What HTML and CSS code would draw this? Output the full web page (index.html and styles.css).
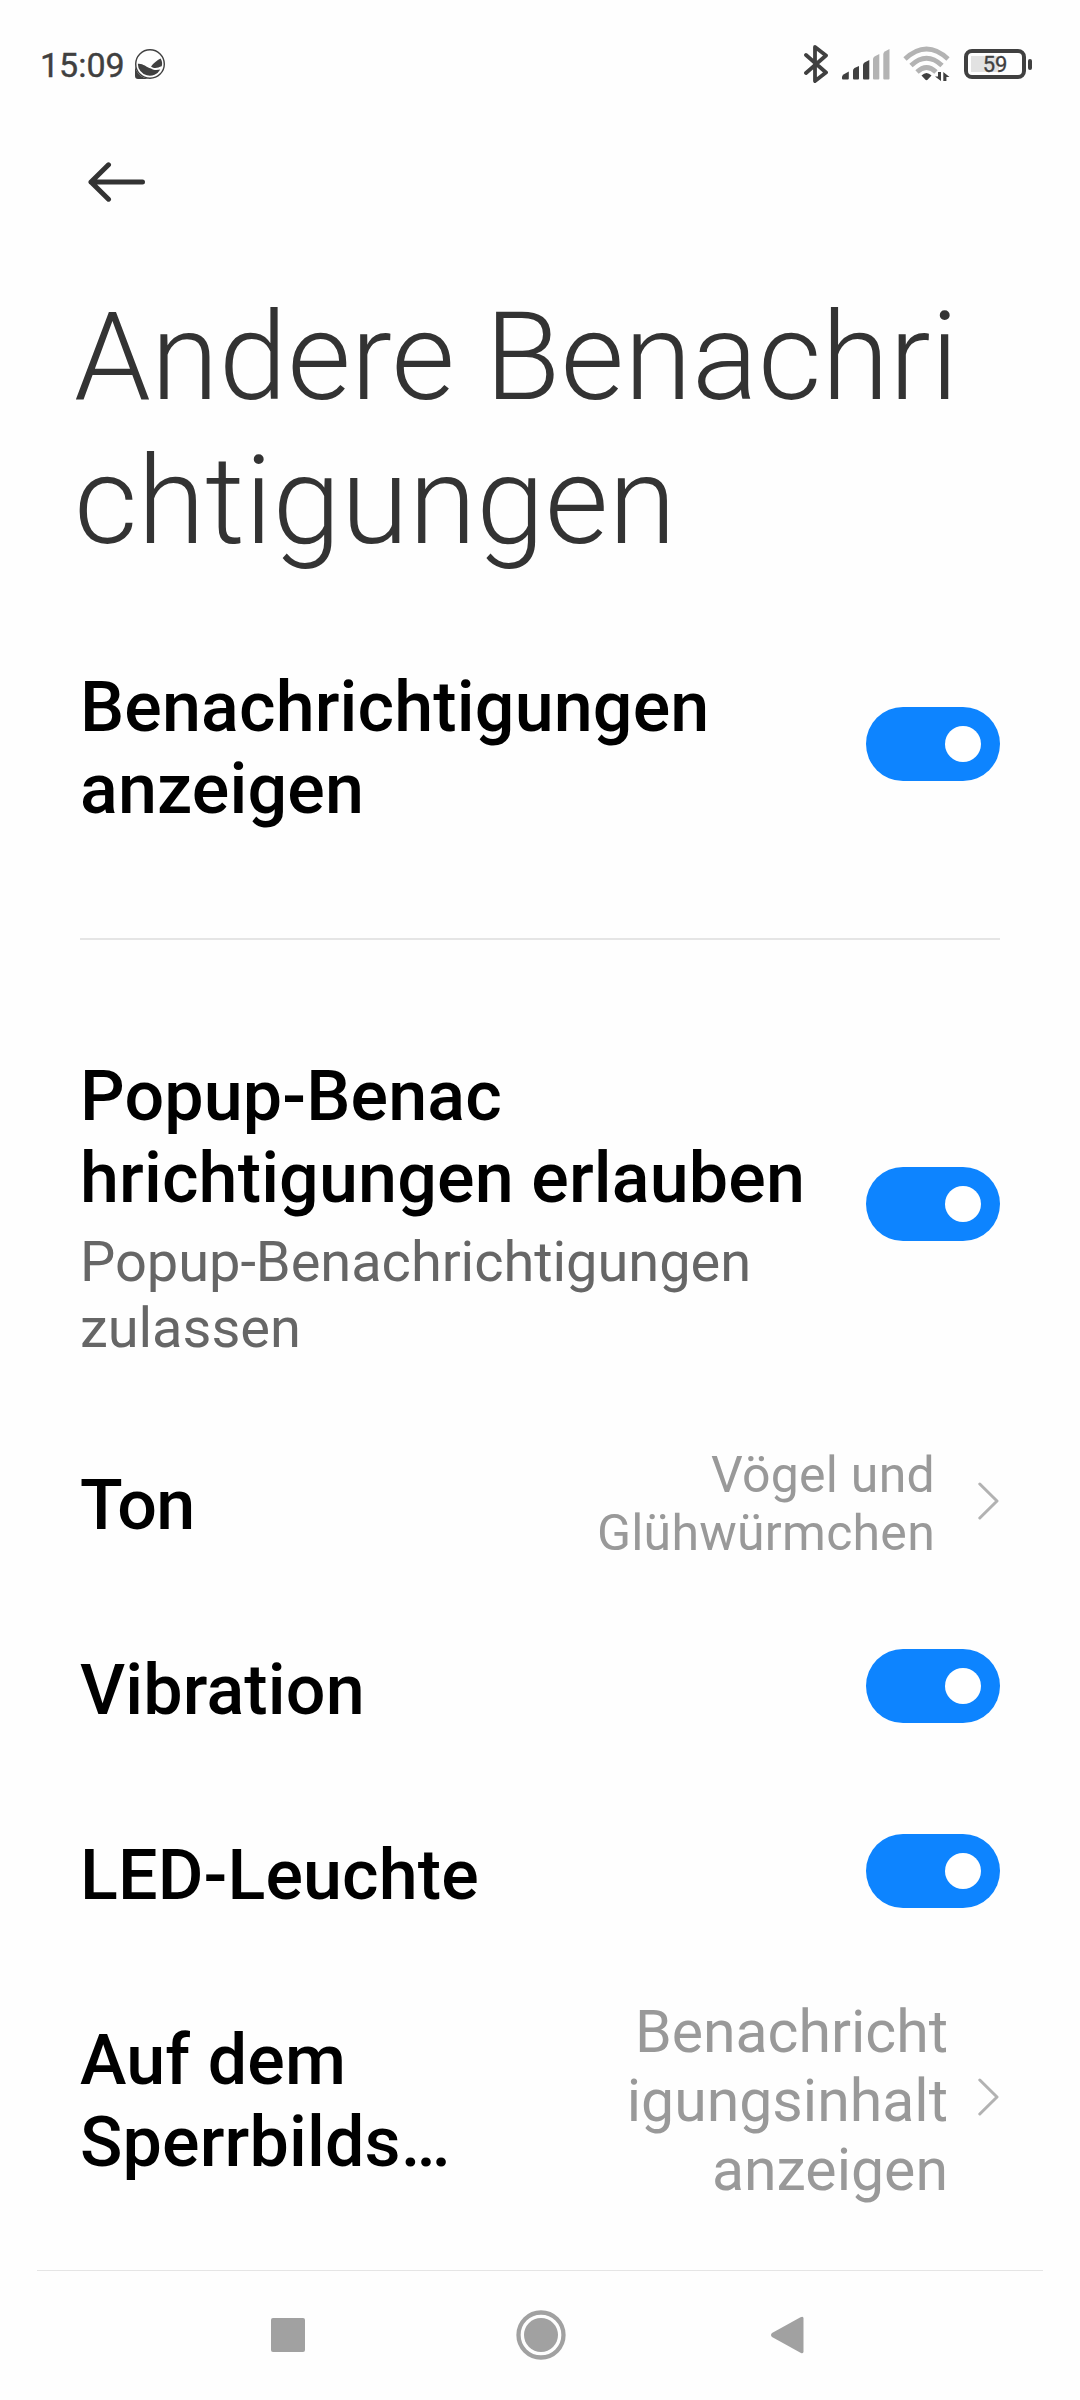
FILE: index.html
```html
<!DOCTYPE html>
<html lang="de">
<head>
<meta charset="utf-8">
<title>Andere Benachrichtigungen</title>
<link rel="stylesheet" href="styles.css">
</head>
<body>
<div class="screen">
  <header class="status">
    <span class="time">15:09</span>
    <svg class="app-icon" width="30" height="30" viewBox="0 0 30 30">
      <path d="M0 15V27Q0 30 3 30H15A15 15 0 0 1 0 15Z" fill="#404040"/>
      <circle cx="15" cy="15" r="14.3" fill="#fefefe" stroke="#404040" stroke-width="1.4"/>
      <path d="M2.800 14.800C8 14.200 11 18 16 19.500C19.500 21.800 22.500 21 25.300 20.500A12 12 0 0 1 2.800 14.800Z" fill="#404040"/>
      <path d="M16 17.500C18.500 14 22 11.500 25.500 9.500Q28 13 26.700 17.300C23 18.500 20 20.500 16 17.500Z" fill="#404040"/>
    </svg>
    <div class="indicators">
      <svg width="24" height="40" viewBox="0 0 24 40" fill="none" stroke="#404040" stroke-width="3.8" stroke-linejoin="round" stroke-linecap="round"><path d="M2 11L22 28.500L11 37V3L22 11.500L2 29"/></svg>
      <svg class="signal" width="48" height="31" viewBox="0 0 48 31">
        <g fill="#404040"><path d="M0 28Q0 26.500 1.500 25.500L6.800 22.500V29.500Q6.800 30.500 5.800 30.500H1Q0 30.500 0 29.500Z"/><path d="M11 21.500Q11 20 12.500 19L17 17V29.500Q17 30.500 16 30.500H12Q11 30.500 11 29.500Z"/><path d="M21 16Q21 14.500 22.500 13.500L27.300 11V29.500Q27.300 30.500 26.300 30.500H22Q21 30.500 21 29.500Z"/></g>
        <g fill="#b3b3b3"><path d="M31 10Q31 8.500 32.500 7.500L37.300 5V29.500Q37.300 30.500 36.300 30.500H32Q31 30.500 31 29.500Z"/><path d="M41.300 5Q41.300 3.500 42.800 2.500L47.500 0V29.500Q47.500 30.500 46.500 30.500H42.300Q41.300 30.500 41.300 29.500Z"/></g>
      </svg>
      <svg class="wifi" width="48" height="36" viewBox="0 0 48 36">
        <g fill="none" stroke="#b3b3b3" stroke-width="4.800"><path d="M2 13Q23.500-7 45 13"/><path d="M8 19.500Q23.500 5 39 19.500"/><path d="M14 26Q23.500 17 33 26"/></g>
        <path d="M18.500 29.500Q23.500 24.500 28.500 29.500L24.800 33.500Q23.500 34.800 22.200 33.500Z" fill="#404040"/>
        <path d="M38 26V35L32 30.500H35V26ZM40.300 35V26L46.500 31H43.400V35Z" fill="#404040"/>
      </svg>
      <div class="battery"><span>59</span></div>
    </div>
  </header>
  <nav class="toolbar">
    <svg width="58" height="40" viewBox="0 0 58 40" fill="none" stroke="#333" stroke-width="5" stroke-linecap="round" stroke-linejoin="round"><path d="M20.500 2.800L3 20L20.500 37.200M3 20H54.500"/></svg>
  </nav>
  <h1>Andere Benachri<br>chtigungen</h1>
  <main>
    <section class="row show">
      <div class="label">Benachrichtigungen<br>anzeigen</div>
      <div class="switch"></div>
    </section>
    <hr>
    <section class="row popup">
      <div><div class="label">Popup-Benac<br>hrichtigungen erlauben</div><p>Popup-Benachrichtigungen<br>zulassen</p></div>
      <div class="switch"></div>
    </section>
    <section class="row sound">
      <div class="label">Ton</div>
      <div class="value">Vögel und<br>Glühwürmchen</div>
      <svg class="chevron" width="22" height="38" viewBox="0 0 22 38"><path d="M1.800 2L19 19L1.800 36"/></svg>
    </section>
    <section class="row vibration"><div class="label">Vibration</div><div class="switch"></div></section>
    <section class="row led"><div class="label">LED-Leuchte</div><div class="switch"></div></section>
    <section class="row lock">
      <div class="label">Auf dem<br>Sperrbilds…</div>
      <div class="value">Benachricht<br>igungsinhalt<br>anzeigen</div>
      <svg class="chevron" width="22" height="38" viewBox="0 0 22 38"><path d="M1.800 2L19 19L1.800 36"/></svg>
    </section>
  </main>
  <footer>
    <svg width="34" height="34" viewBox="0 0 34 34"><rect width="34" height="34" rx="2" fill="#a1a1a1"/></svg>
    <svg class="home" width="50" height="50" viewBox="0 0 50 50"><circle cx="25" cy="25" r="22.500" fill="none" stroke="#a1a1a1" stroke-width="4.300"/><circle cx="25" cy="25" r="17" fill="#a1a1a1"/></svg>
    <svg width="33" height="38" viewBox="0 0 33 38"><path d="M1 17L29.500 1.200Q32.500-.300 32.500 2.500V35.500Q32.500 38.300 29.500 36.800L1 21Q-1 19 1 17Z" fill="#a1a1a1"/></svg>
  </footer>
</div>
</body>
</html>
```
FILE: styles.css
```css
* { box-sizing: border-box; }
body { margin: 0; background: #fefefe; font-family: Roboto, sans-serif; }
svg { display: block; flex: none; }

.screen { width: 1080px; height: 2400px; display: flex; flex-direction: column; }

.status { height: 128px; padding: 0 48px 0 40px; display: flex; align-items: center; color: #404040; }
.time { width: 95px; padding-top: 1px; font-size: 34px; line-height: 40px; -webkit-text-stroke: 0.4px #404040; }
.indicators { margin-left: auto; display: flex; align-items: center; }
.signal { margin: 1px 0 0 14px; }
.wifi { margin-left: 13px; }
.battery { position: relative; width: 62px; height: 30px; margin: 0 6px 0 13px; padding: 3px; border: 4px solid #404040; border-radius: 8px; background: linear-gradient(#e2e2e2, #e2e2e2) 3px 3px / 28px 16px no-repeat; font-size: 22px; line-height: 17px; text-align: center; -webkit-text-stroke: 0.3px #404040; }
.battery::after { content: ""; position: absolute; right: -10px; top: 5.500px; width: 4px; height: 11px; border-radius: 2px; background: #404040; }

.toolbar { height: 109px; padding: 34px 0 0 88px; }

h1 { margin: 48px 0 0; padding-left: 74px; font-size: 123px; line-height: 144px; font-weight: 300; letter-spacing: 0.1px; color: #333; }

main { padding: 93px 80px 0; }
.row { display: flex; align-items: center; }
.label { font-size: 70px; line-height: 82px; font-weight: 500; letter-spacing: 0.15px; color: #000; white-space: nowrap; }
.row p { margin: 10px 0 0; font-size: 56px; line-height: 66px; letter-spacing: -0.05px; color: #666; }
.value { margin-left: auto; text-align: right; color: #999; }
hr { height: 2px; margin: 108px 0 115px; border: 0; background: #e5e5e5; }

.switch { width: 134px; height: 74px; margin: 0 0 8px auto; padding: 19px; border-radius: 37px; background: #0d84ff; }
.switch::after { content: ""; display: block; width: 36px; height: 36px; margin-left: auto; border-radius: 50%; background: #fff; }
.chevron { margin-bottom: 7px; fill: none; stroke: #b2b2b2; stroke-width: 3px; stroke-linecap: round; stroke-linejoin: round; }

.sound { height: 118px; margin-top: 84px; }
.sound .label { padding-top: 2px; letter-spacing: -0.7px; }
.sound .value { font-size: 50px; line-height: 58px; letter-spacing: 0.25px; }
.sound .chevron { margin-left: 43px; }
.vibration { margin-top: 86px; }
.led { margin-top: 103px; }
.lock { margin-top: 81px; }
.lock .value { font-size: 59px; line-height: 69px; }
.lock .chevron { margin-left: 30px; }

footer { height: 130px; margin: auto 37px 0; padding: 0 239px 1px 234px; border-top: 1px solid #e5e5e5; display: flex; justify-content: space-between; align-items: center; }
.home { margin-left: 5px; }
```
